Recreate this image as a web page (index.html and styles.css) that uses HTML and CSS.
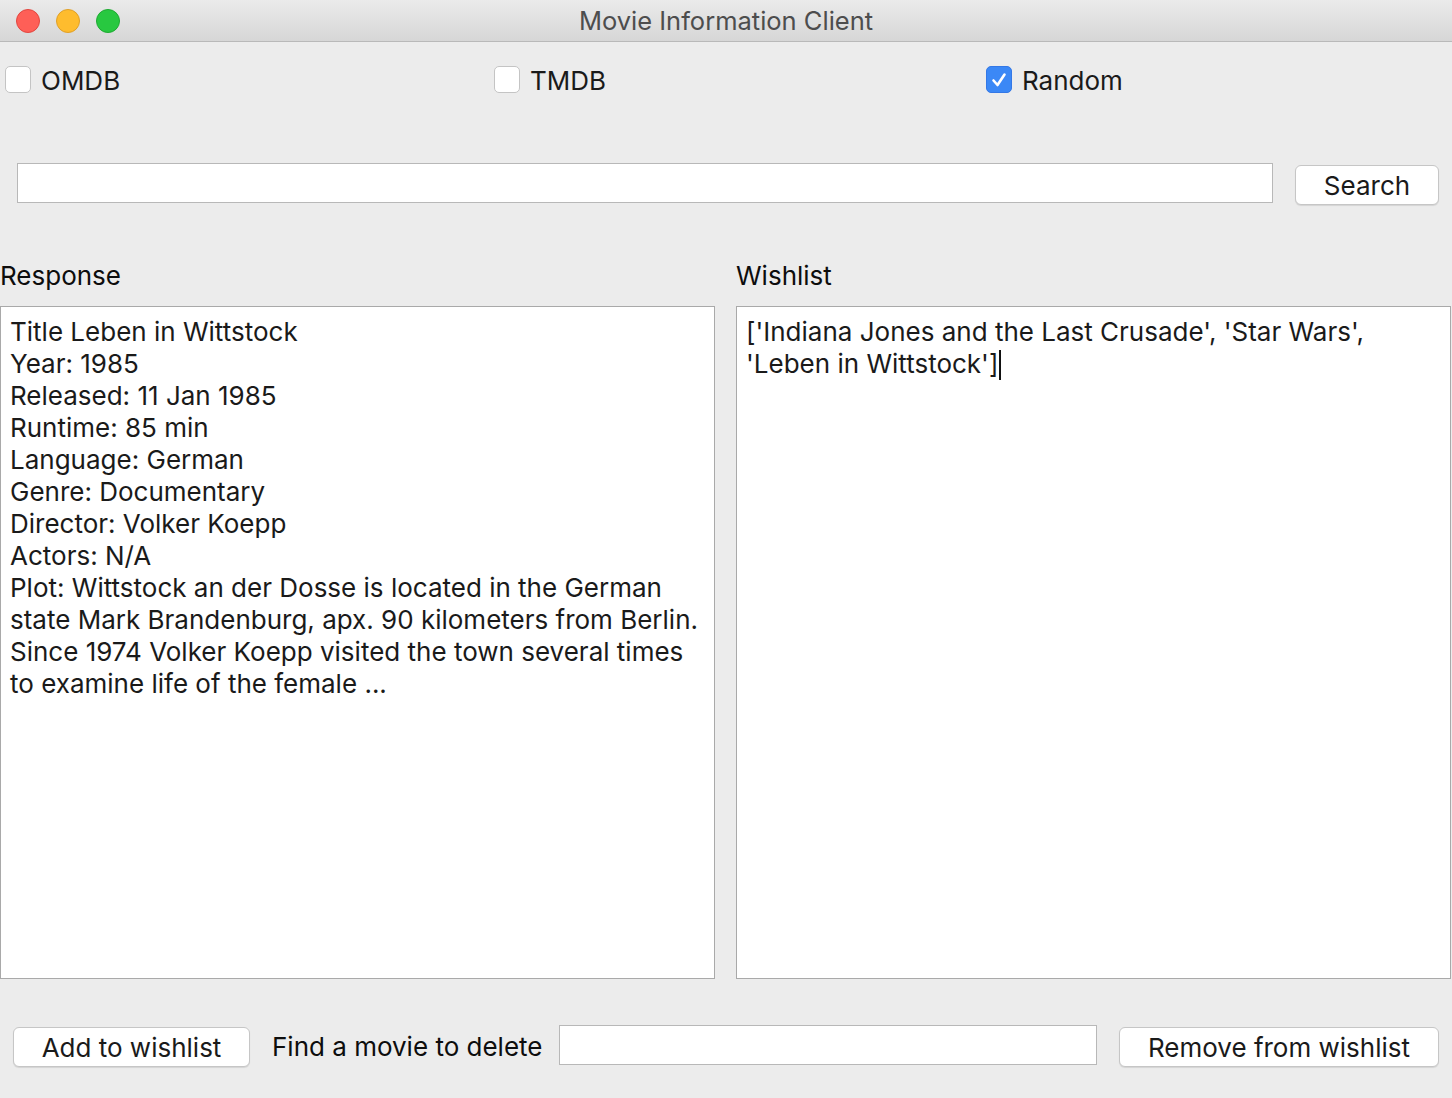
FILE: index.html
```html
<!DOCTYPE html>
<html>
<head>
<meta charset="utf-8">
<link rel="stylesheet" href="styles.css">
</head>
<body>
<div class="window">
  <div class="titlebar">
    <div class="lights">
      <span class="light red"></span>
      <span class="light yellow"></span>
      <span class="light green"></span>
    </div>
    <div class="title">Movie Information Client</div>
  </div>

  <div class="checks">
    <label class="check"><span class="box"></span><span class="check-text">OMDB</span></label>
    <label class="check"><span class="box"></span><span class="check-text">TMDB</span></label>
    <label class="check"><span class="box checked"><svg viewBox="0 0 26 26" width="26" height="26"><path d="M7.5 13.5 L11.5 18 L18.5 7.5" fill="none" stroke="#fff" stroke-width="2.6" stroke-linecap="round" stroke-linejoin="round"/></svg></span><span class="check-text">Random</span></label>
  </div>

  <div class="search-row">
    <div class="input wide"></div>
    <div class="button search">Search</div>
  </div>

  <div class="panels">
    <div class="panel">
      <div class="panel-label">Response</div>
      <div class="textbox">Title Leben in Wittstock<br>Year: 1985<br>Released: 11 Jan 1985<br>Runtime: 85 min<br>Language: German<br>Genre: Documentary<br>Director: Volker Koepp<br>Actors: N/A<br>Plot: Wittstock an der Dosse is located in the German<br>state Mark Brandenburg, apx. 90 kilometers from Berlin.<br>Since 1974 Volker Koepp visited the town several times<br>to examine life of the female ...</div>
    </div>
    <div class="panel">
      <div class="panel-label">Wishlist</div>
      <div class="textbox">['Indiana Jones and the Last Crusade', 'Star Wars',<br>'Leben in Wittstock']<span class="caret"></span></div>
    </div>
  </div>

  <div class="bottom-row">
    <div class="button add">Add to wishlist</div>
    <div class="find-label">Find a movie to delete</div>
    <div class="input del"></div>
    <div class="button remove">Remove from wishlist</div>
  </div>
</div>
</body>
</html>
```

FILE: styles.css
```css
* { box-sizing: border-box; }
html, body {
  margin: 0;
  padding: 0;
  background: #ececec;
}
body {
  font-family: "Inter", "Liberation Sans", sans-serif;
  color: #1a1a1a;
  width: 1452px;
  height: 1098px;
  overflow: hidden;
}
.window {
  width: 1452px;
  height: 1098px;
  background: #ececec;
}
.titlebar {
  height: 42px;
  background: linear-gradient(#ebebeb, #d6d6d6);
  border-bottom: 1px solid #b9b9b9;
  display: flex;
  align-items: center;
  position: relative;
}
.lights {
  display: flex;
  gap: 16px;
  padding-left: 16px;
}
.light {
  width: 24px;
  height: 24px;
  border-radius: 50%;
  display: block;
}
.red { background: #fe5f57; border: 1px solid #e2463f; }
.yellow { background: #febc2e; border: 1px solid #e0a028; }
.green { background: #28c840; border: 1px solid #1eaa32; }
.title {
  position: absolute;
  left: 0;
  right: 0;
  top: 0;
  height: 41px;
  line-height: 42px;
  text-align: center;
  font-size: 25.5px;
  color: #4d4d4d;
  pointer-events: none;
}
.checks {
  display: grid;
  grid-template-columns: 489px 492px 1fr;
  padding-left: 5px;
  margin-top: 24px;
  height: 28px;
}
.check {
  display: flex;
  align-items: flex-start;
  gap: 10px;
  font-size: 26px;
  color: #1a1a1a;
}
.check-text {
  line-height: 28px;
  margin-top: 1px;
}
.box {
  width: 26px;
  height: 27px;
  background: #fff;
  border: 1px solid #c4c4c4;
  border-radius: 5px;
  display: block;
  flex: none;
}
.box.checked {
  background: #3b88f6;
  border-color: #3478e6;
}
.box svg { display: block; margin: 0 -1px; }
.search-row {
  display: flex;
  align-items: flex-start;
  padding: 0 13px 0 17px;
  margin-top: 69px;
  gap: 22px;
}
.input {
  height: 40px;
  background: #fff;
  border: 1px solid #b8b8b8;
}
.input.wide { flex: 1; }
.button {
  height: 40px;
  background: #fff;
  border: 1px solid #c6c6c6;
  border-radius: 6px;
  box-shadow: 0 1px 1px rgba(0,0,0,0.10);
  font-size: 26px;
  color: #1a1a1a;
  display: flex;
  align-items: center;
  justify-content: center;
  flex: none;
}
.button.search {
  width: 144px;
  margin-top: 2px;
}
.panels {
  display: grid;
  grid-template-columns: 715px 715px;
  column-gap: 21px;
  margin-top: 53px;
}
.panel-label {
  font-size: 26px;
  color: #0d0d0d;
  height: 48px;
  line-height: 36px;
  padding-left: 0;
}
.textbox {
  height: 673px;
  background: #fff;
  border: 1px solid #a9a9a9;
  padding: 9px 9px;
  font-size: 26px;
  line-height: 32px;
  color: #1a1a1a;
  white-space: nowrap;
}
.caret {
  display: inline-block;
  width: 2px;
  height: 30px;
  background: #111;
  vertical-align: -7px;
  margin-left: 1px;
}
.bottom-row {
  display: flex;
  align-items: flex-start;
  padding: 0 13px;
  margin-top: 46px;
}
.button.add {
  width: 237px;
  margin-top: 2px;
}
.find-label {
  margin-left: 22px;
  font-size: 26px;
  color: #0d0d0d;
  height: 44px;
  line-height: 44px;
  white-space: nowrap;
  flex: none;
}
.input.del {
  flex: 1;
  margin-left: 16px;
}
.button.remove {
  width: 320px;
  margin-left: 22px;
  margin-top: 2px;
}
```
